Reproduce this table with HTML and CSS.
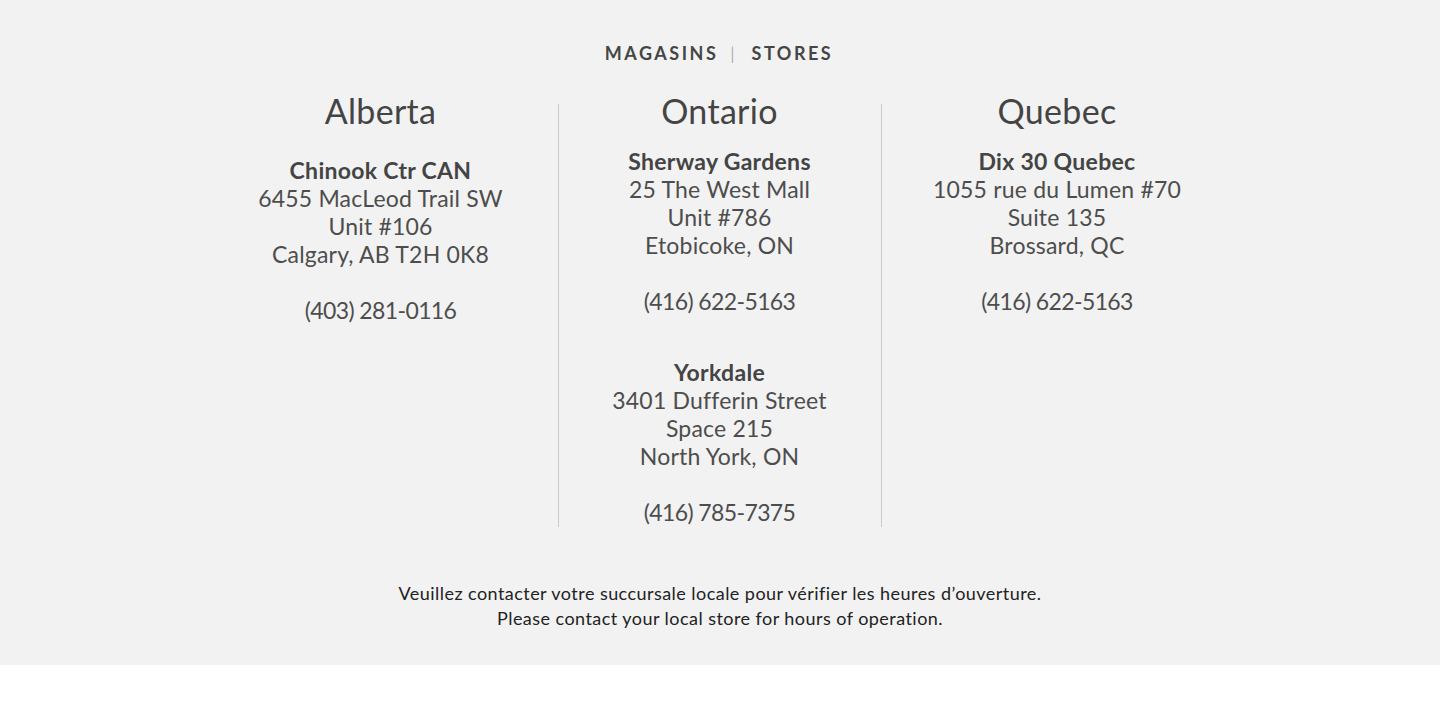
FILE: index.html
```html
<!DOCTYPE html>
<html lang="fr">
<head>
<meta charset="utf-8">
<title>Magasins | Stores</title>
<link rel="stylesheet" href="styles.css">
</head>
<body>
<section class="stores">
  <h1 class="stores-title"><span>MAGASINS</span><span class="sep">|</span><span>STORES</span></h1>
  <div class="regions">
    <div class="region">
      <h2 class="region-name">Alberta</h2>
      <div class="store store-first-alt">
        <p class="store-name">Chinook Ctr CAN</p>
        <p>6455 MacLeod Trail SW</p>
        <p>Unit #106</p>
        <p>Calgary, AB T2H 0K8</p>
        <p class="phone">(403) 281-0116</p>
      </div>
    </div>
    <div class="region">
      <h2 class="region-name">Ontario</h2>
      <div class="store">
        <p class="store-name">Sherway Gardens</p>
        <p>25 The West Mall</p>
        <p>Unit #786</p>
        <p>Etobicoke, ON</p>
        <p class="phone">(416) 622-5163</p>
      </div>
      <div class="store store-next">
        <p class="store-name">Yorkdale</p>
        <p>3401 Dufferin Street</p>
        <p>Space 215</p>
        <p>North York, ON</p>
        <p class="phone">(416) 785-7375</p>
      </div>
    </div>
    <div class="region">
      <h2 class="region-name">Quebec</h2>
      <div class="store">
        <p class="store-name">Dix 30 Quebec</p>
        <p>1055 rue du Lumen #70</p>
        <p>Suite 135</p>
        <p>Brossard, QC</p>
        <p class="phone">(416) 622-5163</p>
      </div>
    </div>
  </div>
  <div class="note">
    <p>Veuillez contacter votre succursale locale pour vérifier les heures d’ouverture.</p>
    <p>Please contact your local store for hours of operation.</p>
  </div>
</section>
</body>
</html>
```
FILE: styles.css
```css
html, body {
  margin: 0;
  padding: 0;
  background: #ffffff;
}
body {
  font-family: Lato, "Noto Sans", "Liberation Sans", sans-serif;
  color: #444444;
}
p, h1, h2 {
  margin: 0;
}
.stores {
  background: #f2f2f2;
  height: 665px;
  box-sizing: border-box;
  padding-top: 41px;
}
.stores-title {
  text-align: center;
  font-size: 18px;
  line-height: 24px;
  font-weight: 700;
  letter-spacing: 2.5px;
  color: #454545;
  display: flex;
  justify-content: center;
  align-items: center;
  padding-right: 2px;
}
.stores-title .sep {
  font-weight: 300;
  color: #8a8a8a;
  margin: 0 17px 0 12px;
  letter-spacing: 0;
}
.regions {
  margin-top: 39px;
  display: grid;
  grid-template-columns: 354px 323px 352px;
  justify-content: center;
  padding-right: 4px;
}
.region {
  text-align: center;
  padding-bottom: 1px;
}
.region + .region {
  border-left: 1px solid #c9c9c9;
}
.region-name {
  margin-top: -13px;
  font-size: 34px;
  line-height: 40px;
  font-weight: 400;
  letter-spacing: 0.3px;
  color: #444444;
}
.store {
  margin-top: 16px;
  font-size: 23px;
  line-height: 28px;
  letter-spacing: 0.2px;
  color: #4d4d4d;
}
.store-first-alt {
  margin-top: 25px;
}
.store-next {
  margin-top: 43px;
}
.store-name {
  font-weight: 700;
  color: #444444;
  letter-spacing: 0.3px;
}
.phone {
  margin-top: 28px;
  letter-spacing: -0.6px;
}
.note {
  margin-top: 54px;
  text-align: center;
  font-size: 18px;
  line-height: 25px;
  letter-spacing: 0.45px;
  color: #222222;
}
```
